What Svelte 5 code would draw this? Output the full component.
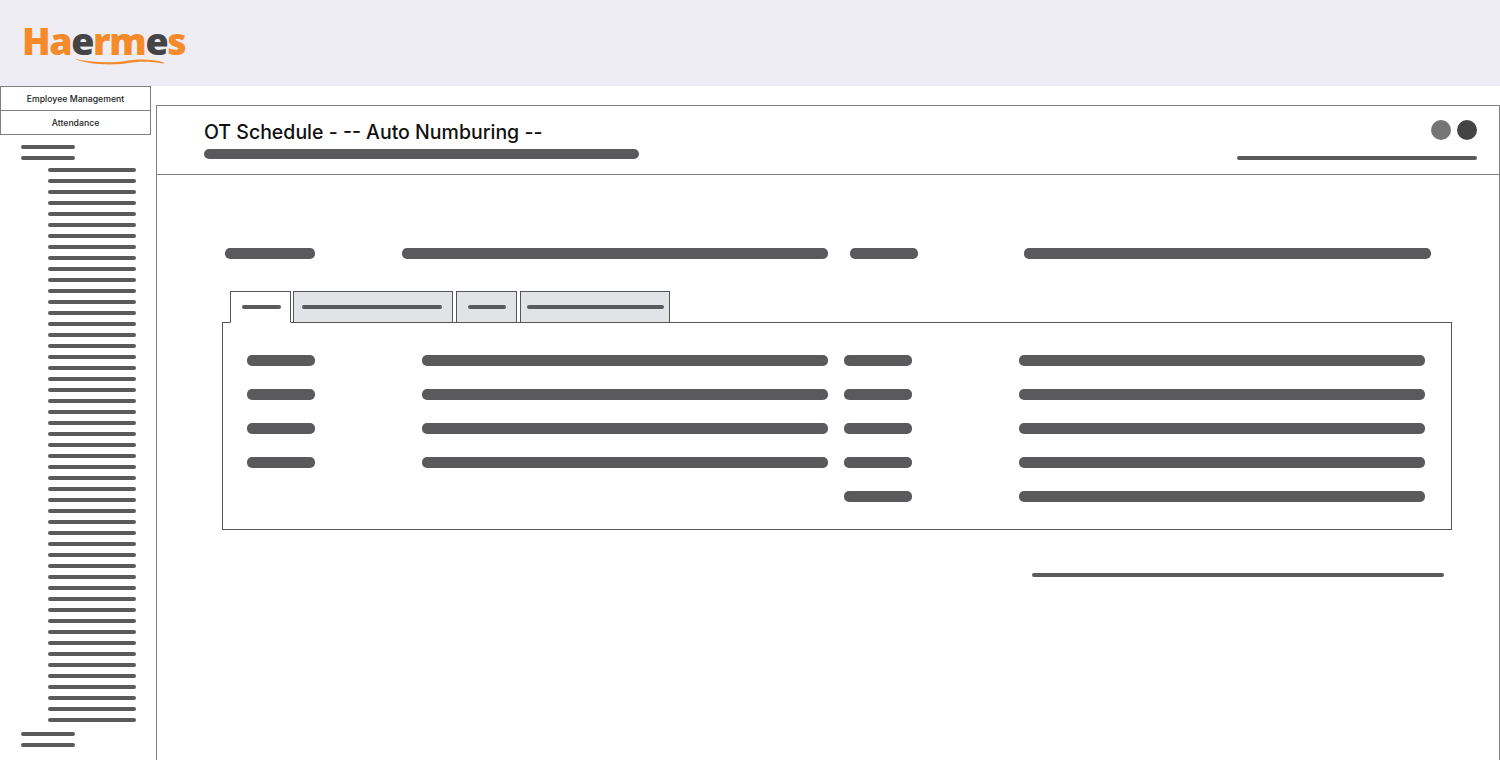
<script lang="ts">
	const subItems = Array.from({ length: 51 });
	const rows = [
		{ left: true },
		{ left: true },
		{ left: true },
		{ left: true },
		{ left: false }
	];
	const tabs = [
		{ w: 61, bar: 39, pad: 11, active: true },
		{ w: 160, bar: 140, pad: 8, active: false },
		{ w: 61, bar: 38, pad: 11, active: false },
		{ w: 150, bar: 137, pad: 6, active: false }
	];
</script>

<header class="top">
	<div class="logo">
		<div class="word"><span class="o">Ha</span><span class="d">e</span><span class="o">rm</span><span class="d">e</span><span class="o">s</span></div>
		<svg class="swoosh" width="92" height="8" viewBox="0 0 92 8">
			<path d="M1 0.5C16 4.5 36 5 51 3.2C63 1 78 0.5 91 4.5L90.5 5.5C76 3 64 3.5 52 5.5C36 7.5 14 6.5 1 0.5Z" fill="#f58a2b" />
		</svg>
	</div>
</header>

<div class="page">
	<aside class="side">
		<div class="nav">
			<div class="nav-item">Employee Management</div>
			<div class="nav-item">Attendance</div>
		</div>
		<div class="tree">
			<div class="group">
				<i class="line short"></i>
				<i class="line short"></i>
			</div>
			<div class="sub">
				{#each subItems as _}
					<i class="line long"></i>
				{/each}
			</div>
			<div class="group">
				<i class="line short"></i>
				<i class="line short"></i>
			</div>
		</div>
	</aside>

	<main class="panel">
		<div class="head">
			<div class="head-left">
				<h1>OT Schedule - -- Auto Numburing --</h1>
				<div class="bar sub-title"></div>
			</div>
			<div class="head-right">
				<div class="dots">
					<span class="dot light"></span>
					<span class="dot dark"></span>
				</div>
				<i class="line status"></i>
			</div>
		</div>

		<div class="body">
			<div class="summary">
				<div class="bar s1"></div>
				<div class="bar s2"></div>
				<div class="bar s3"></div>
				<div class="bar s4"></div>
			</div>

			<div class="tabs">
				{#each tabs as t}
					<div class="tab" class:active={t.active} style:width="{t.w}px" style:padding-left="{t.pad}px">
						<i class="line" style:width="{t.bar}px"></i>
					</div>
				{/each}
			</div>

			<div class="box">
				{#each rows as r}
					<div class="row">
						{#if r.left}
							<div class="bar c1"></div>
							<div class="bar c2"></div>
						{:else}
							<span></span>
							<span></span>
						{/if}
						<div class="bar c3"></div>
						<div class="bar c4"></div>
					</div>
				{/each}
			</div>

			<div class="foot">
				<i class="line foot-line"></i>
			</div>
		</div>
	</main>
</div>

<style>
	:global(body) {
		margin: 0;
		background: #fff;
		overflow: hidden;
	}
	.top {
		height: 86px;
		background: #efedf4;
		box-sizing: border-box;
		padding: 20px 0 0 22px;
	}
	.logo {
		width: 165px;
	}
	.word {
		font-family: 'Open Sans', sans-serif;
		font-weight: 800;
		font-size: 37.5px;
		line-height: 41px;
		letter-spacing: -1.4px;
		white-space: nowrap;
	}
	.o {
		color: #f58a2b;
	}
	.d {
		color: #444446;
	}
	.swoosh {
		display: block;
		margin: -3px 0 0 51px;
	}
	.page {
		display: flex;
		height: 674px;
		overflow: hidden;
	}
	.side {
		width: 156px;
		flex: none;
	}
	.nav {
		width: 151px;
		border: 1px solid #808080;
		box-sizing: border-box;
	}
	.nav-item {
		height: 23px;
		display: flex;
		align-items: center;
		justify-content: center;
		font-family: Inter, sans-serif;
		font-weight: 500;
		font-size: 8.7px;
		color: #222;
	}
	.nav-item + .nav-item {
		border-top: 1px solid #808080;
	}
	.tree {
		padding: 10px 0 0 21px;
	}
	.group {
		display: flex;
		flex-direction: column;
		gap: 7px;
	}
	.sub {
		display: flex;
		flex-direction: column;
		gap: 7px;
		padding: 8px 0 10px 27px;
	}
	.line {
		display: block;
		height: 4px;
		background: #5a5a5c;
		border-radius: 2px;
	}
	.short {
		width: 54px;
	}
	.long {
		width: 88px;
	}
	.panel {
		flex: 1;
		margin-top: 19px;
		border: 1px solid #808080;
		border-bottom: 0;
	}
	.head {
		height: 69px;
		box-sizing: border-box;
		border-bottom: 1px solid #808080;
		display: flex;
		justify-content: space-between;
		padding: 13px 22px 0 47px;
	}
	h1 {
		margin: 0 0 3px;
		font-family: Inter, sans-serif;
		font-weight: 500;
		font-size: 19.5px;
		line-height: 27px;
		color: #111;
	}
	.bar {
		height: 11px;
		background: #5a5a5c;
		border-radius: 5px;
	}
	.sub-title {
		width: 435px;
		height: 10px;
	}
	.head-right {
		display: flex;
		flex-direction: column;
		align-items: flex-end;
		padding-top: 1px;
	}
	.dots {
		display: flex;
		gap: 6px;
		margin-bottom: 16px;
	}
	.dot {
		width: 20px;
		height: 20px;
		border-radius: 50%;
	}
	.light {
		background: #757575;
	}
	.dark {
		background: #444444;
	}
	.status {
		width: 240px;
	}
	.body {
		padding: 72px 0 0 65px;
	}
	.summary {
		display: flex;
		margin-top: 1px;
		margin-bottom: 32px;
		padding-left: 3px;
	}
	.s1 {
		width: 90px;
	}
	.s2 {
		width: 426px;
		margin-left: 87px;
	}
	.s3 {
		width: 68px;
		margin-left: 22px;
	}
	.s4 {
		width: 407px;
		margin-left: 106px;
	}
	.tabs {
		display: flex;
		gap: 3px;
		padding-left: 8px;
		position: relative;
		z-index: 1;
		margin-bottom: -1px;
	}
	.tab {
		height: 32px;
		box-sizing: border-box;
		border: 1px solid #555;
		background: #e2e3e7;
		display: flex;
		align-items: center;
		padding-bottom: 1px;
	}
	.tab.active {
		background: #fff;
		border-bottom-color: #fff;
		margin-right: -1px;
	}
	.box {
		width: 1230px;
		height: 208px;
		box-sizing: border-box;
		border: 1px solid #555;
		padding: 32px 0 0 24px;
		display: flex;
		flex-direction: column;
		gap: 23px;
	}
	.row {
		display: flex;
	}
	.c1 {
		width: 68px;
	}
	.c2 {
		width: 406px;
		margin-left: 107px;
	}
	.row span:first-child {
		width: 68px;
	}
	.row span:nth-child(2) {
		width: 406px;
		margin-left: 107px;
	}
	.c3 {
		width: 68px;
		margin-left: 16px;
	}
	.c4 {
		width: 406px;
		margin-left: 107px;
	}
	.foot {
		width: 1222px;
		display: flex;
		justify-content: flex-end;
		padding-top: 43px;
	}
	.foot-line {
		width: 412px;
	}
</style>
